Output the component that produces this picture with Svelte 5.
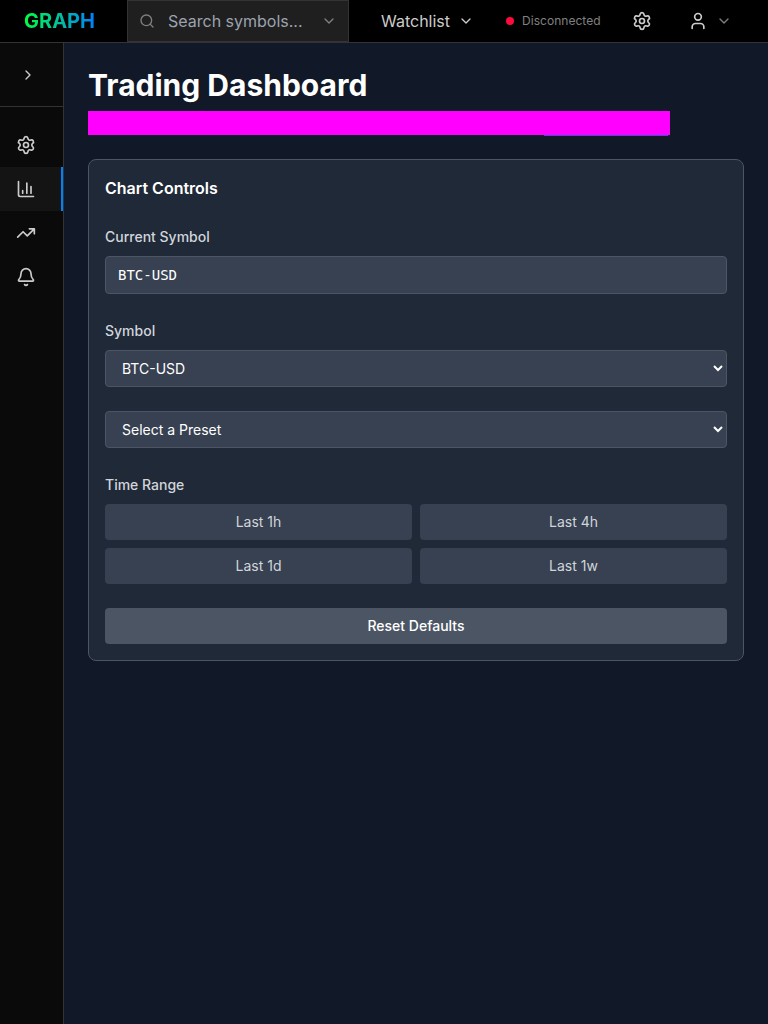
<script>
  const ranges = ['Last 1h', 'Last 4h', 'Last 1d', 'Last 1w'];
  let symbol = $state('BTC-USD');
  let preset = $state('');
</script>

{#snippet gear()}
  <svg width="20" height="20" viewBox="0 0 24 24">
    <path d="M9.671 4.136a2.34 2.34 0 0 1 4.659 0 2.34 2.34 0 0 0 3.319 1.915 2.34 2.34 0 0 1 2.33 4.033 2.34 2.34 0 0 0 0 3.831 2.34 2.34 0 0 1-2.33 4.033 2.34 2.34 0 0 0-3.319 1.915 2.34 2.34 0 0 1-4.659 0 2.34 2.34 0 0 0-3.32-1.915 2.34 2.34 0 0 1-2.33-4.033 2.34 2.34 0 0 0 0-3.831A2.34 2.34 0 0 1 6.35 6.051a2.34 2.34 0 0 0 3.319-1.915" />
    <circle cx="12" cy="12" r="3" />
  </svg>
{/snippet}

{#snippet chevron()}
  <svg width="16" height="16" viewBox="0 0 24 24"><path d="m6 9 6 6 6-6" /></svg>
{/snippet}

<div class="app">
  <header>
    <div class="logo"><span>GRAPH</span></div>
    <div class="search">
      <svg width="16" height="16" viewBox="0 0 24 24"><circle cx="11" cy="11" r="8" /><path d="m21 21-4.34-4.34" /></svg>
      <input placeholder="Search symbols..." />
      {@render chevron()}
    </div>
    <button class="watch">Watchlist {@render chevron()}</button>
    <div class="status"><i></i>Disconnected</div>
    <button class="settings">{@render gear()}</button>
    <button class="user">
      <svg width="20" height="20" viewBox="0 0 24 24"><path d="M19 21v-2a4 4 0 0 0-4-4H9a4 4 0 0 0-4 4v2" /><circle cx="12" cy="7" r="4" /></svg>
      <span>{@render chevron()}</span>
    </button>
  </header>
  <div class="body">
    <aside>
      <div class="toggle"><svg width="16" height="16" viewBox="0 0 24 24"><path d="m9 18 6-6-6-6" /></svg></div>
      <nav>
        <div class="item">{@render gear()}</div>
        <div class="item active"><svg width="20" height="20" viewBox="0 0 24 24"><path d="M3 3v16a2 2 0 0 0 2 2h16M18 17V9M13 17V5M8 17v-3" /></svg></div>
        <div class="item"><svg width="20" height="20" viewBox="0 0 24 24"><path d="M16 7h6v6M22 7l-8.5 8.5-5-5L2 17" /></svg></div>
        <div class="item"><svg width="20" height="20" viewBox="0 0 24 24"><path d="M10.268 21a2 2 0 0 0 3.464 0M3.262 15.326A1 1 0 0 0 4 17h16a1 1 0 0 0 .74-1.673C19.41 13.956 18 12.499 18 8A6 6 0 0 0 6 8c0 4.499-1.411 5.956-2.738 7.326" /></svg></div>
      </nav>
    </aside>
    <main>
      <h1>Trading Dashboard</h1>
      <div class="banner"><div class="link"></div></div>
      <section>
        <h2>Chart Controls</h2>
        <div class="label">Current Symbol</div>
        <div class="value">{symbol}</div>
        <label class="label" for="symbol">Symbol</label>
        <select id="symbol" bind:value={symbol}><option>BTC-USD</option></select>
        <select class="preset" bind:value={preset}><option value="">Select a Preset</option></select>
        <div class="label">Time Range</div>
        <div class="ranges">{#each ranges as range}<button>{range}</button>{/each}</div>
        <button class="reset">Reset Defaults</button>
      </section>
    </main>
  </div>
</div>

<style>
  :global(body) { margin: 0; background: #111827; }
  .app, .app * { box-sizing: border-box; }
  .app { height: 1024px; display: flex; flex-direction: column; font-family: Inter, sans-serif; font-size: 14px; line-height: 20px; color: #fff; }
  svg { fill: none; stroke: currentColor; stroke-width: 2; stroke-linecap: round; stroke-linejoin: round; flex: none; display: block; }
  button { font: inherit; border: 0; padding: 0; background: none; color: inherit; }
  header { height: 43px; flex: none; display: flex; align-items: center; background: #000; border-bottom: 1px solid #333; color: #ccc; }
  .logo { width: 127px; padding-left: 24px; font-size: 20px; line-height: 28px; font-weight: 700; }
  .logo span { background: linear-gradient(90deg, #00ff41, #0080ff); background-clip: text; -webkit-background-clip: text; color: transparent; }
  .search { width: 222px; height: 42px; display: flex; align-items: center; background: #1f1f1f; border: 1px solid #333; padding: 0 11px; color: #808080; }
  .search input { flex: 1; min-width: 0; margin: 0 12px 0 13px; padding: 0; border: 0; outline: 0; background: none; font: 16px/24px Inter, sans-serif; color: #fff; }
  .search input::placeholder { color: #9ca3af; opacity: 1; }
  .watch { display: flex; align-items: center; gap: 8px; margin-left: 32px; font-size: 16px; }
  .status { width: 95px; white-space: nowrap; display: flex; align-items: center; gap: 8px; margin-left: 32px; font-size: 12px; color: #808080; letter-spacing: .03px; }
  .status i { width: 8px; height: 8px; flex: none; border-radius: 50%; background: #ff0a3c; }
  .settings { margin-left: 31px; }
  .user { display: flex; align-items: center; gap: 8px; margin-left: 36px; }
  .user span { color: #808080; }
  .body { flex: 1; display: flex; min-height: 0; }
  aside { width: 64px; flex: none; background: #0a0a0a; border-right: 1px solid #333; color: #ccc; }
  .toggle { height: 64px; display: flex; align-items: center; padding-left: 20px; border-bottom: 1px solid #333; }
  nav { padding-top: 16px; }
  .item { height: 44px; display: flex; align-items: center; padding-left: 16px; }
  .active { background: #141414; border-right: 2px solid #0080ff; }
  main { flex: 1; background: #111827; padding: 24px; }
  h1 { margin: 0 0 8px; font-size: 30px; line-height: 36px; font-weight: 700; }
  .banner { width: 582px; height: 24px; background: #f0f; display: flex; align-items: flex-end; justify-content: flex-end; padding-right: 2px; }
  .link { width: 124px; height: 1px; background: #4f46e5; transform: translateY(1px); }
  section { margin-top: 24px; background: #1f2937; border: 1px solid #4b5563; border-radius: 8px; padding: 16px; }
  h2 { margin: 0 0 27px; font-size: 16px; line-height: 24px; font-weight: 600; }
  .label { display: block; margin-bottom: 9px; color: #d1d5db; font-weight: 500; line-height: 20px; }
  .value { height: 38px; display: flex; align-items: center; padding: 0 12px; margin-bottom: 27px; background: #374151; border: 1px solid #4b5563; border-radius: 4px; font-family: "DejaVu Sans Mono", monospace; }
  select { display: block; width: 100%; height: 37px; margin: 0; padding: 0 12px; background: #374151; color: #fff; border: 1px solid #4b5563; border-radius: 4px; font: 14px Inter, sans-serif; }
  .preset { margin: 24px 0 27px; }
  .ranges { display: grid; grid-template-columns: 1fr 1fr; gap: 8px; }
  .ranges button { height: 36px; border-radius: 4px; background: #374151; color: #d1d5db; }
  .reset { display: block; width: 100%; height: 36px; margin-top: 24px; border-radius: 4px; background: #4b5563; color: #fff; font-weight: 500; }
</style>
